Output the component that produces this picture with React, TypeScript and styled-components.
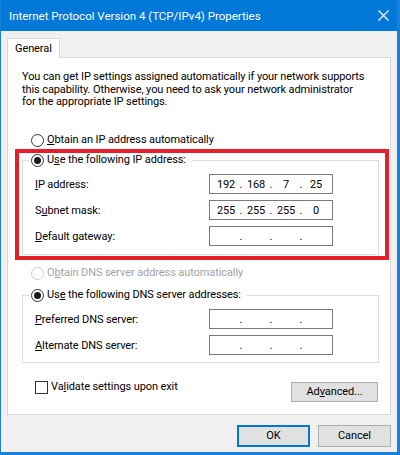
import React from 'react';
import styled, { createGlobalStyle } from 'styled-components';

const Global = createGlobalStyle`
  html, body { margin: 0; padding: 0; background: #ffffff; }
  body { width: 400px; height: 455px; overflow: hidden; }
`;

const FONT = `Roboto, "Noto Sans", sans-serif`;

const Window = styled.div`
  width: 400px;
  height: 455px;
  box-sizing: border-box;
  display: flex;
  flex-direction: column;
  background: #f0f0f0;
  border-left: 1px solid #1a7fd6;
  border-right: 3px solid #1a7fd6;
  border-bottom: 3px solid #1a7fd6;
  font-family: ${FONT};
  font-size: 11px;
  letter-spacing: -0.1px;
  color: #000;
  white-space: nowrap;
  overflow: hidden;
`;

const TitleBar = styled.div`
  height: 31px;
  flex: none;
  background: #0078d7;
  color: #fff;
  display: flex;
  align-items: center;
  justify-content: space-between;
  padding: 0 8px 0 8px;
  font-size: 11.5px;
  letter-spacing: 0;
`;

const CloseIcon = () => (
  <svg width="11" height="11" viewBox="0 0 11 11">
    <path d="M0.5 0.5 L10.5 10.5 M10.5 0.5 L0.5 10.5" stroke="#fff" strokeWidth="1.2" fill="none" />
  </svg>
);

const Body = styled.div`
  flex: 1;
  display: flex;
  flex-direction: column;
  padding: 7px 6px 5px 6px;
`;

const TabStrip = styled.div`
  display: flex;
  position: relative;
  z-index: 1;
  margin-bottom: -1px;
`;

const Tab = styled.div`
  height: 20px;
  box-sizing: border-box;
  background: #fff;
  border: 1px solid #d9d9d9;
  border-bottom: none;
  padding: 0 7px;
  display: flex;
  align-items: center;
  line-height: 14px;
`;

const Panel = styled.div`
  background: #fff;
  border: 1px solid #d9d9d9;
  padding: 13px 11px 12px 14px;
  display: flex;
  flex-direction: column;
`;

const Intro = styled.p`
  margin: 0;
  line-height: 12.5px;
`;

const OptionRow = styled.div<{ $mt: number; $disabled?: boolean }>`
  display: flex;
  align-items: center;
  gap: 3px;
  height: 14px;
  line-height: 14px;
  margin-top: ${(p) => p.$mt}px;
  margin-left: 9px;
  color: ${(p) => (p.$disabled ? '#a3a3a3' : '#000')};
`;

const RadioCircle = styled.span<{ $checked?: boolean; $disabled?: boolean }>`
  width: 13px;
  height: 13px;
  box-sizing: border-box;
  border-radius: 50%;
  border: 1px solid ${(p) => (p.$disabled ? '#cccccc' : '#333333')};
  background: #fff;
  display: flex;
  align-items: center;
  justify-content: center;
  flex: none;
  &::after {
    content: '';
    display: ${(p) => (p.$checked ? 'block' : 'none')};
    width: 7px;
    height: 7px;
    border-radius: 50%;
    background: #1a1a1a;
  }
`;

const Key = styled.span`
  text-decoration: underline;
  text-underline-offset: 1px;
  text-decoration-thickness: 1px;
`;

const Group = styled.div<{ $mt: number; $pb: number }>`
  position: relative;
  border: 1px solid #dcdcdc;
  margin-top: ${(p) => p.$mt}px;
  padding: 0 45px ${(p) => p.$pb}px 12px;
  display: flex;
  flex-direction: column;
  gap: 6px;
`;

const Legend = styled.div`
  display: flex;
  align-items: center;
  gap: 3px;
  height: 14px;
  line-height: 14px;
  width: fit-content;
  background: #fff;
  margin: -8px 0 1px -6px;
  padding: 0 6px 0 2px;
`;

const Highlight = styled.div`
  position: absolute;
  left: -8px;
  top: -12px;
  right: -11px;
  bottom: -6px;
  border: 4px solid #e3202a;
  pointer-events: none;
`;

const FieldRow = styled.div`
  display: flex;
  align-items: center;
  justify-content: space-between;
  height: 20px;
`;

const IpBox = styled.div`
  width: 124px;
  height: 20px;
  box-sizing: border-box;
  border: 1px solid #7a7a7a;
  background: #fff;
  display: flex;
  align-items: center;
  padding-left: 4px;
`;

const Octet = styled.span`
  width: 24px;
  text-align: center;
`;

const Dot = styled.span`
  width: 6px;
  text-align: center;
`;

const BottomRow = styled.div`
  display: flex;
  justify-content: space-between;
  align-items: flex-start;
  margin-top: 19px;
`;

const CheckRow = styled.div`
  display: flex;
  align-items: center;
  gap: 3px;
  height: 14px;
  line-height: 14px;
  margin: -2px 0 0 13px;
`;

const CheckBox = styled.span`
  width: 13px;
  height: 13px;
  box-sizing: border-box;
  border: 1px solid #333;
  background: #fff;
  flex: none;
`;

const Button = styled.div<{ $w: number; $h: number; $primary?: boolean; $mr?: number }>`
  width: ${(p) => p.$w}px;
  height: ${(p) => p.$h}px;
  box-sizing: border-box;
  margin-right: ${(p) => p.$mr ?? 0}px;
  background: #e1e1e1;
  border: ${(p) => (p.$primary ? '2px solid #0078d7' : '1px solid #adadad')};
  display: flex;
  align-items: center;
  justify-content: center;
  line-height: 14px;
`;

const Footer = styled.div`
  display: flex;
  justify-content: flex-end;
  gap: 8px;
  margin-top: 10px;
`;

const Ip = ({ parts }: { parts: string[] }) => (
  <IpBox>
    <Octet>{parts[0]}</Octet>
    <Dot>.</Dot>
    <Octet>{parts[1]}</Octet>
    <Dot>.</Dot>
    <Octet>{parts[2]}</Octet>
    <Dot>.</Dot>
    <Octet>{parts[3]}</Octet>
  </IpBox>
);

const empty = ['', '', '', ''];

export default function App() {
  return (
    <>
      <Global />
      <Window>
        <TitleBar>
          <span>Internet Protocol Version 4 (TCP/IPv4) Properties</span>
          <CloseIcon />
        </TitleBar>
        <Body>
          <TabStrip>
            <Tab>General</Tab>
          </TabStrip>
          <Panel>
            <Intro>
              You can get IP settings assigned automatically if your network supports
              <br />
              this capability. Otherwise, you need to ask your network administrator
              <br />
              for the appropriate IP settings.
            </Intro>
            <OptionRow $mt={24.5}>
              <RadioCircle />
              <span>
                <Key>O</Key>btain an IP address automatically
              </span>
            </OptionRow>
            <Group $mt={13} $pb={8}>
              <Highlight />
              <Legend>
                <RadioCircle $checked />
                <span>
                  U<Key>s</Key>e the following IP address:
                </span>
              </Legend>
              <FieldRow>
                <span>
                  <Key>I</Key>P address:
                </span>
                <Ip parts={['192', '168', '7', '25']} />
              </FieldRow>
              <FieldRow>
                <span>
                  S<Key>u</Key>bnet mask:
                </span>
                <Ip parts={['255', '255', '255', '0']} />
              </FieldRow>
              <FieldRow>
                <span>
                  <Key>D</Key>efault gateway:
                </span>
                <Ip parts={empty} />
              </FieldRow>
            </Group>
            <OptionRow $mt={11} $disabled>
              <RadioCircle $disabled />
              <span>
                O<Key>b</Key>tain DNS server address automatically
              </span>
            </OptionRow>
            <Group $mt={15} $pb={7}>
              <Legend>
                <RadioCircle $checked />
                <span>
                  Us<Key>e</Key> the following DNS server addresses:
                </span>
              </Legend>
              <FieldRow>
                <span>
                  <Key>P</Key>referred DNS server:
                </span>
                <Ip parts={empty} />
              </FieldRow>
              <FieldRow>
                <span>
                  <Key>A</Key>lternate DNS server:
                </span>
                <Ip parts={empty} />
              </FieldRow>
            </Group>
            <BottomRow>
              <CheckRow>
                <CheckBox />
                <span>
                  Va<Key>l</Key>idate settings upon exit
                </span>
              </CheckRow>
              <Button $w={87} $h={20} $mr={1}>
                <span>
                  Ad<Key>v</Key>anced...
                </span>
              </Button>
            </BottomRow>
          </Panel>
          <Footer>
            <Button $w={73} $h={22} $primary>
              OK
            </Button>
            <Button $w={73} $h={22}>
              Cancel
            </Button>
          </Footer>
        </Body>
      </Window>
    </>
  );
}
